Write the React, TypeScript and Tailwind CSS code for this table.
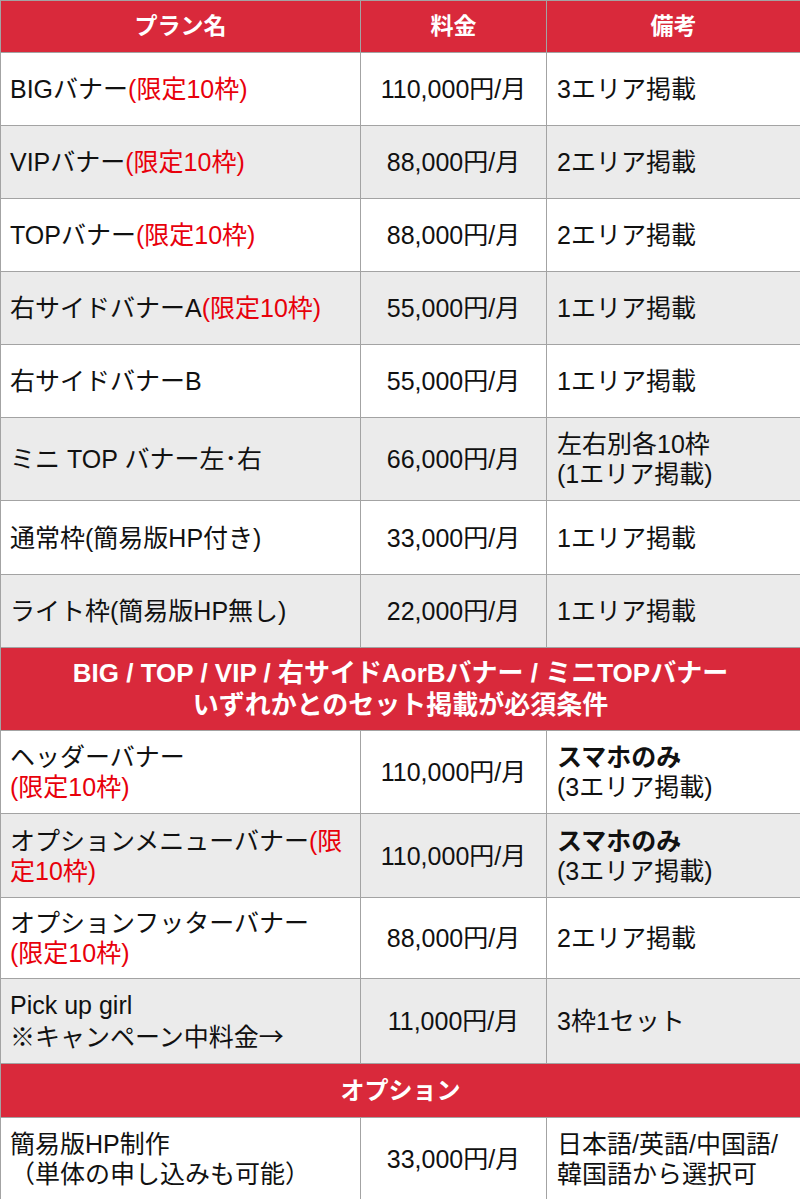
import React from "react";

type Row = {
  plan: React.ReactNode;
  price: string;
  note: React.ReactNode;
  h: string;
};

const Limited = ({ children = "(限定10枠)" }: { children?: React.ReactNode }) => (
  <span className="text-[#e8000b]">{children}</span>
);

const mainRows: Row[] = [
  { plan: <>BIGバナー<Limited /></>, price: "110,000円/月", note: "3エリア掲載", h: "h-[73px]" },
  { plan: <>VIPバナー<Limited /></>, price: "88,000円/月", note: "2エリア掲載", h: "h-[73px]" },
  { plan: <>TOPバナー<Limited /></>, price: "88,000円/月", note: "2エリア掲載", h: "h-[73px]" },
  { plan: <>右サイドバナーA<Limited /></>, price: "55,000円/月", note: "1エリア掲載", h: "h-[73px]" },
  { plan: "右サイドバナーB", price: "55,000円/月", note: "1エリア掲載", h: "h-[73px]" },
  {
    plan: "ミニ TOP バナー左･右",
    price: "66,000円/月",
    note: <>左右別各10枠<br />(1エリア掲載)</>,
    h: "h-[83px]",
  },
  { plan: "通常枠(簡易版HP付き)", price: "33,000円/月", note: "1エリア掲載", h: "h-[74px]" },
  { plan: "ライト枠(簡易版HP無し)", price: "22,000円/月", note: "1エリア掲載", h: "h-[73px]" },
];

const setRows: Row[] = [
  {
    plan: <>ヘッダーバナー<br /><Limited /></>,
    price: "110,000円/月",
    note: <><span className="font-bold">スマホのみ</span><br />(3エリア掲載)</>,
    h: "h-[83px]",
  },
  {
    plan: <>オプションメニューバナー<Limited>(限</Limited><br /><Limited>定10枠)</Limited></>,
    price: "110,000円/月",
    note: <><span className="font-bold">スマホのみ</span><br />(3エリア掲載)</>,
    h: "h-[84px]",
  },
  {
    plan: <>オプションフッターバナー<br /><Limited /></>,
    price: "88,000円/月",
    note: "2エリア掲載",
    h: "h-[81px]",
  },
  {
    plan: (
      <>
        Pick up girl<br />※キャンペーン中料金
        <span className="font-['Noto_Sans_CJK_JP']">→</span>
      </>
    ),
    price: "11,000円/月",
    note: "3枠1セット",
    h: "h-[85px]",
  },
];

const optionRows: Row[] = [
  {
    plan: <>簡易版HP制作<br />（単体の申し込みも可能）</>,
    price: "33,000円/月",
    note: <>日本語/英語/中国語/<br />韓国語から選択可</>,
    h: "h-[82px]",
  },
];

const Rows = ({ rows }: { rows: Row[] }) => (
  <>
    {rows.map((r, i) => (
      <tr key={i} className={`${r.h} ${i % 2 === 1 ? "bg-[#ebebeb]" : "bg-white"}`}>
        <td className="border border-[#a3a3a3] pl-[9px] pr-1 leading-[30px]">{r.plan}</td>
        <td className="border border-[#a3a3a3] text-center leading-[30px]">{r.price}</td>
        <td className="border border-[#a3a3a3] pl-[10px] leading-[30px]">{r.note}</td>
      </tr>
    ))}
  </>
);

const Banner = ({ children, h, size }: { children: React.ReactNode; h: string; size: string }) => (
  <tr className={h}>
    <td
      colSpan={3}
      className={`border border-[#a3a3a3] bg-[#d9293b] text-center font-bold text-white leading-[32px] ${size}`}
    >
      {children}
    </td>
  </tr>
);

export default function App() {
  return (
    <div
      className="w-[800px] bg-white text-[25px] text-[#111]"
      style={{ fontFamily: '"Liberation Sans", "Noto Sans CJK JP", sans-serif' }}
    >
      <table className="w-[800px] table-fixed border-collapse">
        <colgroup>
          <col className="w-[360px]" />
          <col className="w-[186px]" />
          <col className="w-[254px]" />
        </colgroup>
        <thead>
          <tr className="h-[52px] bg-[#d9293b] text-white text-[23px] font-bold">
            <th className="border border-[#a3a3a3]">プラン名</th>
            <th className="border border-[#a3a3a3]">料金</th>
            <th className="border border-[#a3a3a3]">備考</th>
          </tr>
        </thead>
        <tbody>
          <Rows rows={mainRows} />
          <Banner h="h-[83px]" size="text-[26px]">
            BIG / TOP / VIP / 右サイドAorBバナー / ミニTOPバナー
            <br />
            いずれかとのセット掲載が必須条件
          </Banner>
          <Rows rows={setRows} />
          <Banner h="h-[54px]" size="text-[24px]">オプション</Banner>
          <Rows rows={optionRows} />
        </tbody>
      </table>
    </div>
  );
}
